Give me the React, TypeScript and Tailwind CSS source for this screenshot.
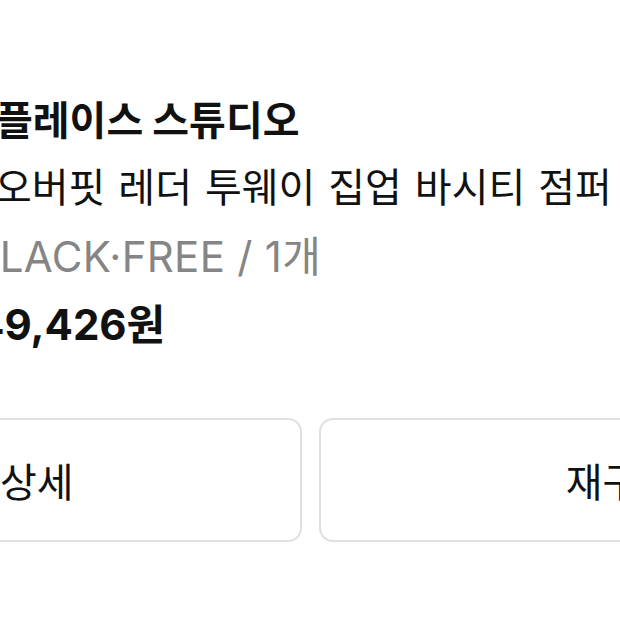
export default function App() {
  return (
    <div className="w-[620px] h-[620px] overflow-hidden bg-white relative font-['Noto_Sans_CJK_KR',sans-serif] text-[#111]">
      <div className="pt-[92px] flex flex-col">
        <div className="ml-[-4px] text-[40px] leading-[52px] font-bold whitespace-nowrap">
          플레이스 스튜디오
        </div>
        <div className="mt-[15px] ml-[-5px] text-[40px] leading-[52px] whitespace-nowrap [word-spacing:4px]">
          오버핏 레더 투웨이 집업 바시티 점퍼
        </div>
        <div className="mt-[20px] ml-[-28px] text-[42px] leading-[52px] tracking-[0.3px] text-[#858585] whitespace-nowrap font-['Inter','Noto_Sans_CJK_KR',sans-serif]">
          BLACK·FREE / 1개
        </div>
        <div className="mt-[16px] ml-[-24px] text-[42px] leading-[52px] font-bold whitespace-nowrap font-['Inter','Noto_Sans_CJK_KR',sans-serif]">
          49,426원
        </div>
      </div>
      <div className="mt-[67px] ml-[-302px] flex gap-[17px]">
        <button className="w-[604px] h-[124px] shrink-0 rounded-[14px] border-2 border-[#e0e0e0] bg-white flex items-center justify-center text-[40px] whitespace-nowrap">
          주문상세
        </button>
        <button className="w-[604px] h-[124px] shrink-0 rounded-[14px] border-2 border-[#e0e0e0] bg-white flex items-center justify-center text-[40px] whitespace-nowrap">
          재구매
        </button>
      </div>
    </div>
  );
}
